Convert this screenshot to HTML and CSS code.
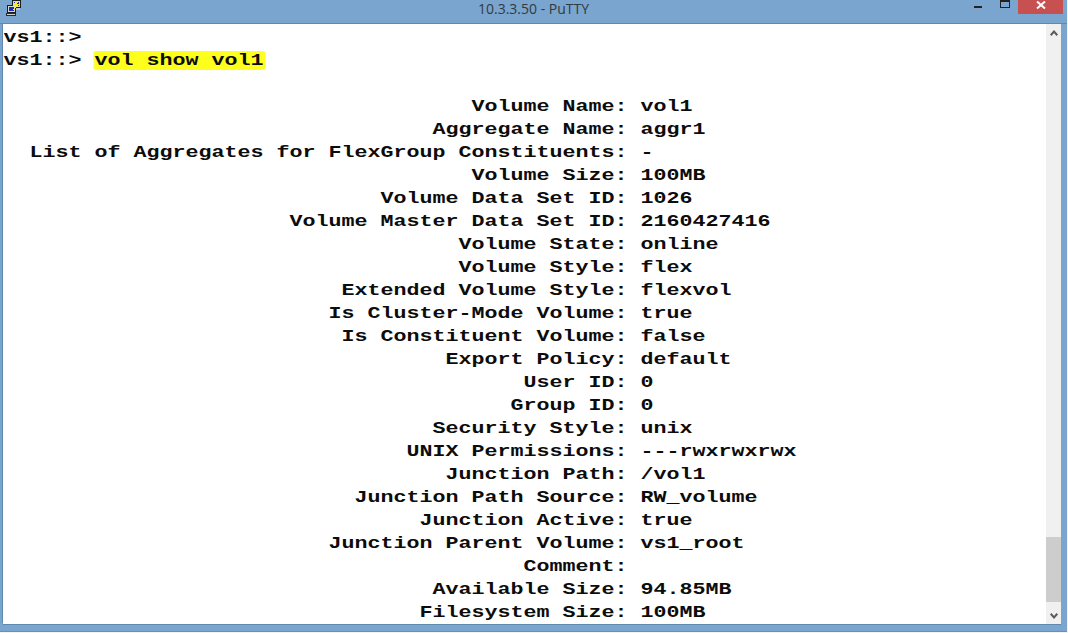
FILE: index.html
```html
<!DOCTYPE html>
<html lang="en">
<head>
<meta charset="utf-8">
<title>10.3.3.50 - PuTTY</title>
<link rel="stylesheet" href="styles.css">
</head>
<body>
<div class="window">
  <header class="titlebar">
    <div class="title-left">
      <svg class="app-icon" width="17" height="16" viewBox="0 0 17 16" shape-rendering="crispEdges">
        <rect x="7" y="0" width="9" height="8" fill="#1c1c1c"/>
        <rect x="8" y="1" width="7" height="6" fill="#d8d8d8"/>
        <rect x="9" y="2" width="5" height="4" fill="#1a2fb0"/>
        <rect x="7" y="8" width="8" height="2" fill="#c8c8c8"/>
        <rect x="2" y="5" width="9" height="8" fill="#1c1c1c"/>
        <rect x="3" y="6" width="7" height="6" fill="#d8d8d8"/>
        <rect x="4" y="7" width="5" height="4" fill="#1a2fb0"/>
        <rect x="1" y="13" width="10" height="3" fill="#2a2a2a"/>
        <rect x="2" y="14" width="8" height="1" fill="#d0d0d0"/>
        <path d="M11 1h3l-2 3h2l-6 6 2-4H8z" fill="#f6ee2a"/>
      </svg>
    </div>
    <div class="title-text">10.3.3.50 - PuTTY</div>
    <div class="controls">
      <span class="btn-min"></span>
      <span class="btn-max"></span>
      <span class="btn-close">
        <svg width="10" height="8" viewBox="0 0 10 8"><path d="M1 0.5l8 7M9 0.5l-8 7" stroke="#fff" stroke-width="2" fill="none"/></svg>
      </span>
    </div>
  </header>
  <main class="client">
    <pre class="terminal">vs1::&gt;
vs1::&gt; <span class="mark">vol show vol1</span>

                                    Volume Name: vol1
                                 Aggregate Name: aggr1
  List of Aggregates for FlexGroup Constituents: -
                                    Volume Size: 100MB
                             Volume Data Set ID: 1026
                      Volume Master Data Set ID: 2160427416
                                   Volume State: online
                                   Volume Style: flex
                          Extended Volume Style: flexvol
                         Is Cluster-Mode Volume: true
                          Is Constituent Volume: false
                                  Export Policy: default
                                        User ID: 0
                                       Group ID: 0
                                 Security Style: unix
                               UNIX Permissions: ---rwxrwxrwx
                                  Junction Path: /vol1
                           Junction Path Source: RW_volume
                                Junction Active: true
                         Junction Parent Volume: vs1_root
                                        Comment:
                                 Available Size: 94.85MB
                                Filesystem Size: 100MB</pre>
    <aside class="scrollbar">
      <span class="arrow">
        <svg width="8" height="6" viewBox="0 0 8 6"><path d="M0.7 5.2L4 1.6l3.3 3.6" stroke="#5a5a5a" stroke-width="2" fill="none"/></svg>
      </span>
      <div class="track"><div class="thumb"></div></div>
      <span class="arrow">
        <svg width="8" height="6" viewBox="0 0 8 6"><path d="M0.7 0.8L4 4.4l3.3-3.6" stroke="#5a5a5a" stroke-width="2" fill="none"/></svg>
      </span>
    </aside>
  </main>
</div>
</body>
</html>
```
FILE: styles.css
```css
html, body {
  margin: 0;
  padding: 0;
  background: #f3f3ef;
  overflow: hidden;
}
.window {
  box-sizing: border-box;
  width: 1067px;
  height: 632px;
  display: flex;
  flex-direction: column;
  background: #7aa5cf;
  border-bottom: 1px solid #6c8fb0;
}
.titlebar {
  height: 23px;
  flex: none;
  display: grid;
  grid-template-columns: 1fr auto 1fr;
  border-bottom: 1px solid #5f89ad;
}
.title-left {
  display: flex;
  padding-left: 5px;
}
.title-text {
  font-family: "Open Sans", sans-serif;
  font-size: 14px;
  line-height: 18px;
  color: #333a40;
}
.controls {
  display: flex;
  justify-content: flex-end;
  align-items: flex-start;
  padding-right: 4px;
}
.btn-min {
  width: 8px;
  height: 2px;
  margin-top: 6px;
  margin-right: 18px;
  background: #222;
}
.btn-max {
  box-sizing: border-box;
  width: 10px;
  height: 8px;
  margin-right: 8px;
  border: 1px solid #222;
  border-top-width: 2px;
}
.btn-close {
  width: 45px;
  height: 14px;
  background: #c75050;
  display: flex;
  justify-content: center;
  padding-top: 1px;
  box-sizing: border-box;
}
.client {
  flex: 1;
  min-height: 0;
  display: flex;
  justify-content: space-between;
  margin: 0 6px 7px 3px;
  background: #fff;
  box-shadow: -1px -1px 0 #5f89ad, 0 1px 0 #5f89ad;
}
.terminal {
  flex: none;
  width: 816px;
  margin: 0;
  padding: 2px 0 0 0.4px;
  box-sizing: border-box;
  height: 100%;
  overflow: hidden;
  font-family: "Liberation Mono", monospace;
  font-weight: 700;
  font-size: 17px;
  line-height: 23px;
  color: #0c0c0c;
  white-space: pre;
  transform: scaleX(1.2743);
  transform-origin: 0 0;
}
.mark {
  background: #ffff1e;
  border-radius: 2px;
  box-shadow: 2px 0 0 #ffff1e, -1px 0 0 #ffff1e;
}
.scrollbar {
  flex: none;
  width: 15px;
  display: flex;
  flex-direction: column;
  background: #f0f0f0;
}
.arrow {
  flex: none;
  height: 17px;
  display: flex;
  align-items: center;
  justify-content: center;
}
.track {
  flex: 1;
  display: flex;
  flex-direction: column;
  justify-content: flex-end;
  padding-bottom: 5px;
}
.thumb {
  height: 65px;
  background: #cdcdcd;
}
```
